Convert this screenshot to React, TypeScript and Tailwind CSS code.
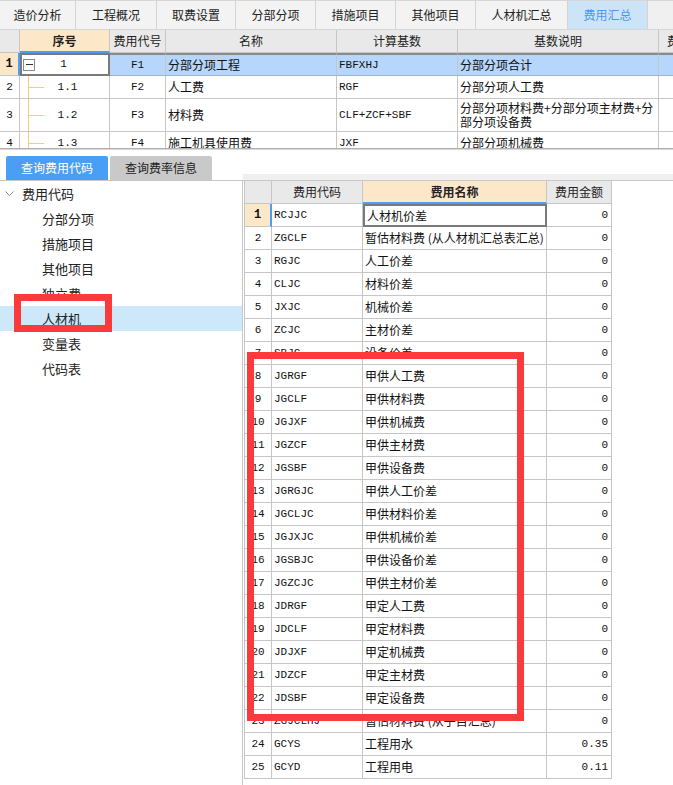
import React from "react";

const cjk = "font-['Microsoft_YaHei','Noto_Sans_CJK_SC',sans-serif]";
const mono = "font-['Liberation_Mono','Noto_Sans_CJK_SC',monospace]";

const topTabs: [string, string][] = [
  ["造价分析", "w-[76px]"],
  ["工程概况", "w-[81px]"],
  ["取费设置", "w-[79px]"],
  ["分部分项", "w-[80px]"],
  ["措施项目", "w-[80px]"],
  ["其他项目", "w-[80px]"],
  ["人材机汇总", "w-[92px]"],
  ["费用汇总", "w-[80px]"],
];

const topCols = "grid grid-cols-[20px_90px_56px_171px_121px_201px_1fr]";
const lowCols = "grid grid-cols-[27px_91px_184px_65px]";

const codes: [string, string, string][] = [
  ["RCJJC", "人材机价差", "0"],
  ["ZGCLF", "暂估材料费 (从人材机汇总表汇总)", "0"],
  ["RGJC", "人工价差", "0"],
  ["CLJC", "材料价差", "0"],
  ["JXJC", "机械价差", "0"],
  ["ZCJC", "主材价差", "0"],
  ["SBJC", "设备价差", "0"],
  ["JGRGF", "甲供人工费", "0"],
  ["JGCLF", "甲供材料费", "0"],
  ["JGJXF", "甲供机械费", "0"],
  ["JGZCF", "甲供主材费", "0"],
  ["JGSBF", "甲供设备费", "0"],
  ["JGRGJC", "甲供人工价差", "0"],
  ["JGCLJC", "甲供材料价差", "0"],
  ["JGJXJC", "甲供机械价差", "0"],
  ["JGSBJC", "甲供设备价差", "0"],
  ["JGZCJC", "甲供主材价差", "0"],
  ["JDRGF", "甲定人工费", "0"],
  ["JDCLF", "甲定材料费", "0"],
  ["JDJXF", "甲定机械费", "0"],
  ["JDZCF", "甲定主材费", "0"],
  ["JDSBF", "甲定设备费", "0"],
  ["ZGJCLHJ", "暂估材料费 (从子目汇总)", "0"],
  ["GCYS", "工程用水", "0.35"],
  ["GCYD", "工程用电", "0.11"],
];

const treeItems = ["分部分项", "措施项目", "其他项目", "独立费", "人材机", "变量表", "代码表"];

const line = "border-[#c6c6c6]";

function TreeLine() {
  return (
    <div className="relative w-[24px] h-full">
      <div className="absolute left-[8px] top-0 w-px h-full bg-[#fcc97c]" />
      <div className="absolute left-[8px] top-1/2 w-[16px] h-px bg-[#fcc97c]" />
    </div>
  );
}

function TopGrid() {
  const sub: [string, string, string, string, string, string][] = [
    ["2", "1.1", "F2", "人工费", "RGF", "分部分项人工费"],
    ["3", "1.2", "F3", "材料费", "CLF+ZCF+SBF", "分部分项材料费+分部分项主材费+分部分项设备费"],
    ["4", "1.3", "F4", "施工机具使用费", "JXF", "分部分项机械费"],
  ];
  const heights = ["h-[23px]", "h-[33px]", "h-[23px]"];
  const sel = `bg-[#b6d6fc] border-t-2 border-t-[#8a8a8a] border-r ${line} border-b border-b-[#9ab3cf]`;
  return (
    <div className="h-[118px] overflow-hidden bg-white">
      <div className={`${topCols} h-[23px] bg-[#e9e9e9] text-[12px] text-[#222] ${cjk}`}>
        <div className={`border-r border-b ${line}`} />
        <div className={`flex items-center justify-center bg-[#fde7c9] font-bold border-r ${line} border-b-2 border-b-[#4a9ff5]`}>序号</div>
        <div className={`flex items-center justify-center border-r border-b ${line}`}>费用代号</div>
        <div className={`flex items-center justify-center border-r border-b ${line}`}>名称</div>
        <div className={`flex items-center justify-center border-r border-b ${line}`}>计算基数</div>
        <div className={`flex items-center justify-center border-r border-b ${line}`}>基数说明</div>
        <div className={`flex items-center pl-[8px] border-b ${line}`}>费</div>
      </div>
      <div className={`${topCols} h-[23px] text-[12px] text-[#111]`}>
        <div className={`flex items-center justify-center bg-[#fde7c9] font-bold ${mono} text-[12px] border-r-2 border-r-[#4a9ff5] border-b ${line}`}>1</div>
        <div className="flex items-center border-2 border-[#7a7a7a] bg-white">
          <div className="ml-[1px] w-[12px] h-[12px] border border-[#8a8a8a] flex items-center justify-center">
            <div className="w-[7px] h-px bg-[#333]" />
          </div>
          <div className={`flex-1 text-center pr-[16px] ${mono} text-[11px]`}>1</div>
        </div>
        <div className={`flex items-center justify-center ${sel} ${mono} text-[11px]`}>F1</div>
        <div className={`flex items-center pl-[2px] ${sel} ${cjk}`}>分部分项工程</div>
        <div className={`flex items-center pl-[2px] ${sel} ${mono} text-[11px]`}>FBFXHJ</div>
        <div className={`flex items-center pl-[2px] ${sel} ${cjk}`}>分部分项合计</div>
        <div className="bg-[#b6d6fc] border-t-2 border-t-[#8a8a8a] border-b border-b-[#9ab3cf]" />
      </div>
      {sub.map((r, i) => (
        <div key={r[0]} className={`${topCols} ${heights[i]} text-[12px] text-[#111]`}>
          <div className={`flex items-center justify-center ${mono} text-[11px] border-r border-b ${line}`}>{r[0]}</div>
          <div className={`flex items-stretch border-r border-b ${line}`}>
            <TreeLine />
            <div className={`flex-1 flex items-center justify-center pr-[18px] ${mono} text-[11px]`}>{r[1]}</div>
          </div>
          <div className={`flex items-center justify-center ${mono} text-[11px] border-r border-b ${line}`}>{r[2]}</div>
          <div className={`flex items-center pl-[2px] ${cjk} border-r border-b ${line}`}>{r[3]}</div>
          <div className={`flex items-center pl-[2px] ${mono} text-[11px] border-r border-b ${line}`}>{r[4]}</div>
          <div className={`flex items-center pl-[2px] leading-[14px] ${cjk} border-r border-b ${line}`}>{r[5]}</div>
          <div className={`border-b ${line}`} />
        </div>
      ))}
    </div>
  );
}

function Tree() {
  return (
    <div className={`w-[243px] shrink-0 bg-white border-r border-[#c8c8c8] text-[13px] text-[#222] ${cjk}`}>
      <div className="h-[25px] flex items-center pl-[5px]">
        <svg width="9" height="6" viewBox="0 0 9 6" className="mr-[8px]">
          <path d="M0.5 0.5 L4.5 4.5 L8.5 0.5" fill="none" stroke="#888" strokeWidth="1" />
        </svg>
        费用代码
      </div>
      {treeItems.map((t) => (
        <div key={t} className={`h-[25px] flex items-center pl-[42px] ${t === "人材机" ? "bg-[#cce8f9]" : ""}`}>
          {t}
        </div>
      ))}
    </div>
  );
}

function CodeTable() {
  return (
    <div className="w-[368px] border-l border-[#c6c6c6] bg-white">
      <div className={`${lowCols} h-[23px] bg-[#e9e9e9] text-[12px] text-[#222] ${cjk}`}>
        <div className={`border-r border-b ${line}`} />
        <div className={`flex items-center justify-center border-r border-b ${line}`}>费用代码</div>
        <div className={`flex items-center justify-center bg-[#fde7c9] font-bold border-r ${line} border-b-2 border-b-[#4a9ff5]`}>费用名称</div>
        <div className={`flex items-center justify-center border-r border-b ${line}`}>费用金额</div>
      </div>
      {codes.map((c, i) => {
        const first = i === 0;
        return (
          <div key={c[0]} className={`${lowCols} h-[23px] text-[12px] text-[#111]`}>
            <div
              className={`flex items-center justify-center ${mono} text-[11px] border-b ${line} ${
                first ? "bg-[#fde7c9] font-bold text-[12px] border-r-2 border-r-[#4a9ff5]" : `border-r ${line}`
              }`}
            >
              {i + 1}
            </div>
            <div className={`flex items-center pl-[2px] ${mono} text-[11px] border-r border-b ${line}`}>{c[0]}</div>
            <div
              className={`flex items-center pl-[2px] whitespace-nowrap overflow-hidden ${cjk} ${
                first ? "border-2 border-[#7a7a7a]" : `border-r border-b ${line}`
              }`}
            >
              {c[1]}
            </div>
            <div className={`flex items-center justify-end pr-[3px] ${mono} text-[11px] border-r border-b ${line}`}>{c[2]}</div>
          </div>
        );
      })}
    </div>
  );
}

export default function App() {
  return (
    <div className="relative w-[673px] h-[785px] overflow-hidden bg-white">
      <div className={`flex h-[30px] bg-[#f0f0f0] border-t border-[#d6d6d6] border-b ${line} text-[12px] text-[#222] ${cjk}`}>
        {topTabs.map(([t, w]) => (
          <div
            key={t}
            className={`${w} flex items-center justify-center border-r border-[#d4d4d4] ${
              t === "费用汇总" ? "bg-[#cce4f8] text-[#4a97ee]" : "bg-[#f3f3f3]"
            }`}
          >
            {t}
          </div>
        ))}
      </div>

      <TopGrid />

      <div className="h-[2px] bg-[#d9d9d9] border-t border-[#b0b0b0]" />

      <div className="flex h-[30px]">
        <div className={`w-[243px] flex items-end pl-[6px] gap-[2px] text-[12px] ${cjk}`}>
          <div className="w-[102px] h-[24px] flex items-center justify-center bg-[#4a9ff5] text-white rounded-t-[2px]">
            查询费用代码
          </div>
          <div className="w-[102px] h-[24px] flex items-center justify-center bg-[#c9c9c9] text-[#222] rounded-t-[2px]">
            查询费率信息
          </div>
        </div>
        <div className="flex-1 flex flex-col justify-end">
          <div className="h-[6px] bg-[#f0f0f0]" />
        </div>
      </div>

      <div className="flex border-t border-[#c8c8c8] h-[605px]">
        <Tree />
        <div className="flex-1 pl-[1px] bg-white">
          <CodeTable />
        </div>
      </div>

      <div className="absolute left-[14px] top-[294px] w-[98px] h-[38px] border-[7px] border-[#fb3b3b]" />
      <div className="absolute left-[247px] top-[352px] w-[277px] h-[369px] border-[7px] border-[#fb3b3b]" />
    </div>
  );
}
